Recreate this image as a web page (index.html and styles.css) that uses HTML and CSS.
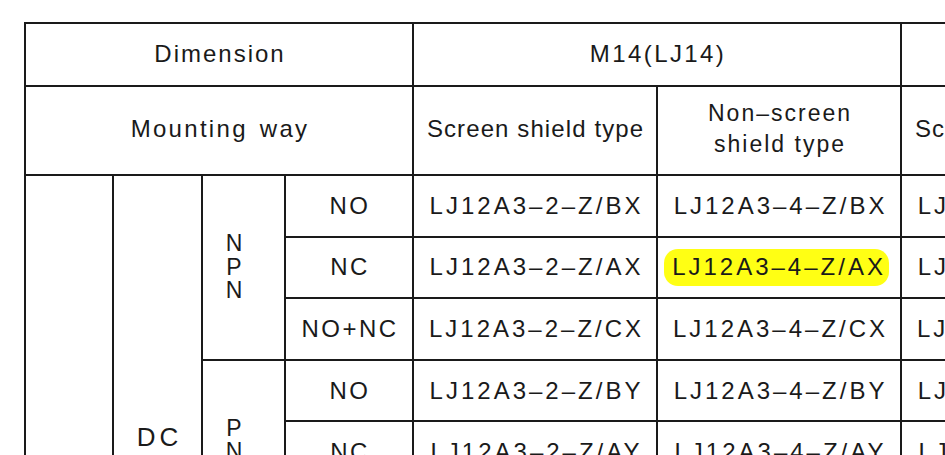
FILE: index.html
```html
<!DOCTYPE html>
<html lang="en">
<head>
<meta charset="utf-8">
<title>Proximity sensor models</title>
<link rel="stylesheet" href="styles.css">
</head>
<body>
<div class="sheet">
<table class="spec">
  <colgroup>
    <col class="c-a"><col class="c-b"><col class="c-c"><col class="c-d">
    <col class="c-m"><col class="c-m"><col class="c-m"><col class="c-m">
  </colgroup>
  <tr class="r-head1">
    <th colspan="4" class="hd dim">Dimension</th>
    <th colspan="2" class="hd size">M14(LJ14)</th>
    <th colspan="2" class="hd size">M18(LJ18)</th>
  </tr>
  <tr class="r-head2">
    <th colspan="4" class="hd mount">Mounting way</th>
    <th class="hd shield">Screen shield type</th>
    <th class="hd two">Non–screen<br>shield type</th>
    <th class="hd shield">Screen shield type</th>
    <th class="hd two">Non–screen<br>shield type</th>
  </tr>
  <tr class="row">
    <td rowspan="8" class="blank"></td>
    <td rowspan="8" class="dc">DC</td>
    <td rowspan="3" class="stack">N<br>P<br>N</td>
    <td class="out">NO</td>
    <td class="code">LJ12A3–2–Z/BX</td>
    <td class="code">LJ12A3–4–Z/BX</td>
    <td class="code">LJ18A3–5–Z/BX</td>
    <td class="code">LJ18A3–8–Z/BX</td>
  </tr>
  <tr class="row">
    <td class="out">NC</td>
    <td class="code">LJ12A3–2–Z/AX</td>
    <td class="code"><span class="mark">LJ12A3–4–Z/AX</span></td>
    <td class="code">LJ18A3–5–Z/AX</td>
    <td class="code">LJ18A3–8–Z/AX</td>
  </tr>
  <tr class="row">
    <td class="out">NO+NC</td>
    <td class="code">LJ12A3–2–Z/CX</td>
    <td class="code">LJ12A3–4–Z/CX</td>
    <td class="code">LJ18A3–5–Z/CX</td>
    <td class="code">LJ18A3–8–Z/CX</td>
  </tr>
  <tr class="row">
    <td rowspan="3" class="stack">P<br>N<br>P</td>
    <td class="out">NO</td>
    <td class="code">LJ12A3–2–Z/BY</td>
    <td class="code">LJ12A3–4–Z/BY</td>
    <td class="code">LJ18A3–5–Z/BY</td>
    <td class="code">LJ18A3–8–Z/BY</td>
  </tr>
  <tr class="row">
    <td class="out">NC</td>
    <td class="code">LJ12A3–2–Z/AY</td>
    <td class="code">LJ12A3–4–Z/AY</td>
    <td class="code">LJ18A3–5–Z/AY</td>
    <td class="code">LJ18A3–8–Z/AY</td>
  </tr>
  <tr class="row">
    <td class="out">NO+NC</td>
    <td class="code">LJ12A3–2–Z/CY</td>
    <td class="code">LJ12A3–4–Z/CY</td>
    <td class="code">LJ18A3–5–Z/CY</td>
    <td class="code">LJ18A3–8–Z/CY</td>
  </tr>
  <tr class="row">
    <td rowspan="2" class="stack">2<br>W</td>
    <td class="out">NO</td>
    <td class="code">LJ12A3–2–Z/EX</td>
    <td class="code">LJ12A3–4–Z/EX</td>
    <td class="code">LJ18A3–5–Z/EX</td>
    <td class="code">LJ18A3–8–Z/EX</td>
  </tr>
  <tr class="row">
    <td class="out">NC</td>
    <td class="code">LJ12A3–2–Z/DX</td>
    <td class="code">LJ12A3–4–Z/DX</td>
    <td class="code">LJ18A3–5–Z/DX</td>
    <td class="code">LJ18A3–8–Z/DX</td>
  </tr>
</table>
</div>
</body>
</html>
```
FILE: styles.css
```css
html, body {
  margin: 0;
  padding: 0;
  background: #ffffff;
  overflow: hidden;
}
body {
  font-family: "Liberation Sans", Arial, sans-serif;
  color: #1a1a1a;
}
.sheet {
  padding: 22px 0 0 24px;
  width: 1500px;
}
.spec {
  border-collapse: collapse;
  table-layout: fixed;
  width: 1364px;
}
.c-a { width: 88px; }
.c-b { width: 89px; }
.c-c { width: 83px; }
.c-d { width: 128px; }
.c-m { width: 244px; }

.spec th, .spec td {
  border: 2px solid #1a1a1a;
  padding: 0;
  text-align: center;
  vertical-align: middle;
  font-weight: normal;
  white-space: nowrap;
  overflow: hidden;
}
.spec .r-head1 th { height: 58px; }
.spec .r-head2 th { height: 83px; }
.spec .row td { height: 59.6px; }

.spec .hd {
  font-size: 24px;
  line-height: 31px;
}
.spec .dim { letter-spacing: 2px; padding: 0 0 3px 2px; }
.spec .size { letter-spacing: 2.4px; padding: 0 0 3px 2px; }
.spec .mount { letter-spacing: 2.3px; word-spacing: 3px; padding: 0 0 4px 2px; }
.spec .shield { letter-spacing: 1.1px; padding: 0 0 4px 1px; }
.spec .two { font-size: 23px; letter-spacing: 2px; padding: 0 0 3px 2px; }

.spec .out {
  font-size: 24px;
  letter-spacing: 2.5px;
  padding-left: 2px;
}
.spec .code {
  font-size: 24px;
  letter-spacing: 3px;
  padding-left: 3px;
}
.spec .stack {
  font-size: 23px;
  line-height: 23.5px;
  padding-right: 19px;
}
.spec .dc {
  font-size: 26px;
  letter-spacing: 4px;
  padding: 33px 0 0 4px;
}
.mark {
  display: inline-block;
  background: #ffff14;
  border-radius: 14px;
  padding: 4px 3px 5px 8px;
  margin-left: -8px;
}
```
